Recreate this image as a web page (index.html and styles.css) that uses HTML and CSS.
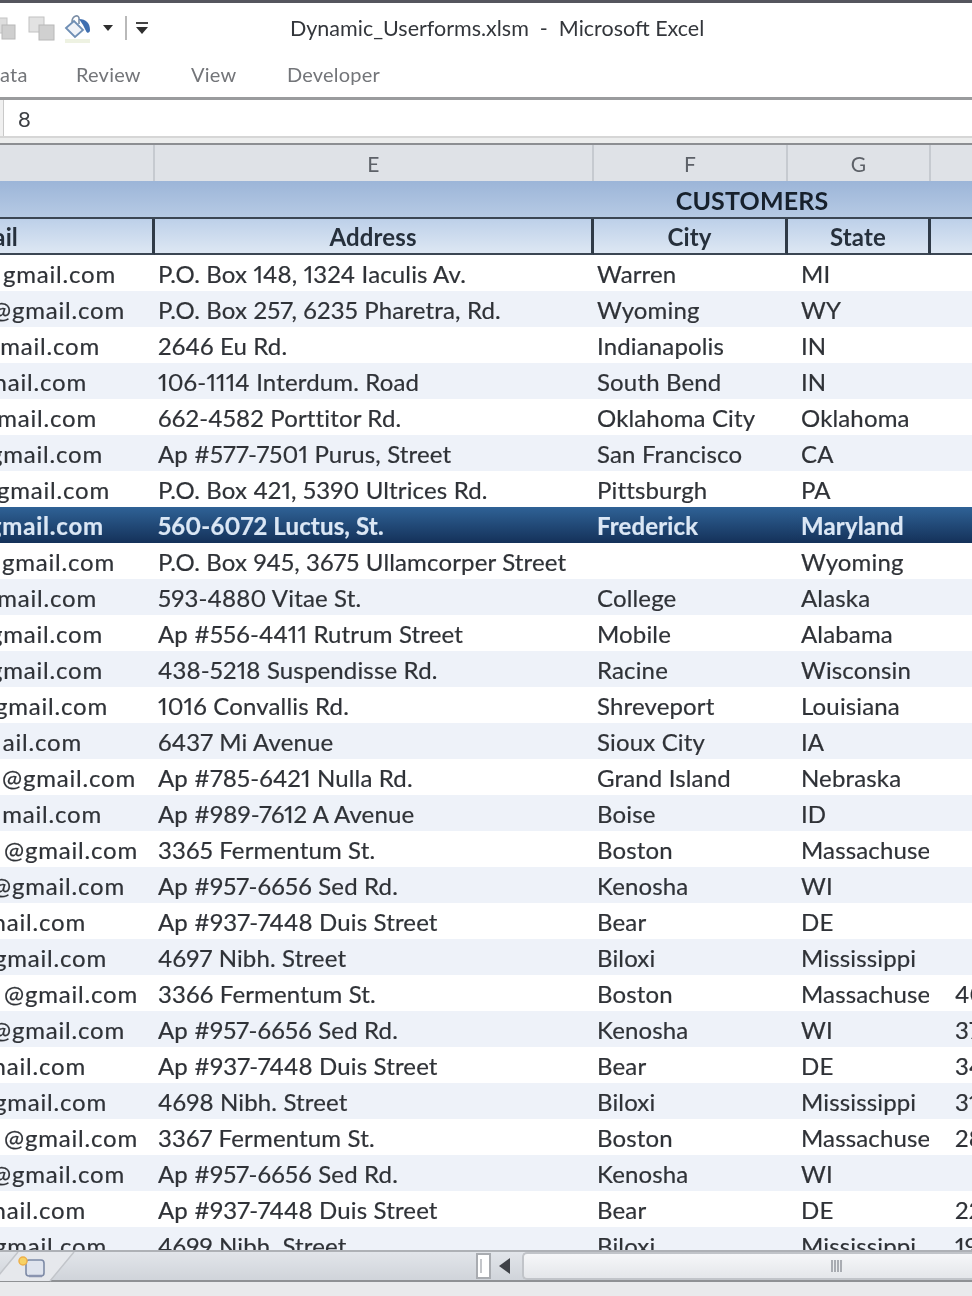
FILE: index.html
```html
<!DOCTYPE html>
<html lang="en">
<head>
    <meta charset="UTF-8">
    <title>Dynamic_Userforms.xlsm - Microsoft Excel</title>
    <link rel="stylesheet" href="styles.css">
</head>
<body>
<div class="app">
    <div class="top-strip"></div>
    <div class="title-bar">
        <div class="qat">
            <svg class="qat-icon" width="20" height="30" viewBox="0 0 20 30"><rect x="-8" y="5" width="15" height="15" fill="#dedede" stroke="#c4c4c4"/><rect x="2" y="12" width="13" height="14" fill="#cfcfcf" stroke="#b8b8b8"/></svg>
            <svg class="qat-icon" width="28" height="30" viewBox="0 0 28 30"><rect x="1" y="4" width="15" height="15" fill="#e2e2e2" stroke="#c2c2c2"/><rect x="11" y="12" width="15" height="15" fill="#d0d0d0" stroke="#b8b8b8"/></svg>
            <svg class="qat-icon" width="28" height="30" viewBox="0 0 28 30"><path d="M2 15 L10 8 L19 17 L11 24 Z" fill="#f0f3f8" stroke="#6f8fb5" stroke-width="1.8"/><path d="M8 9 C8 3 14 1 15 5 L15 11" fill="none" stroke="#7b8ea6" stroke-width="1.6"/><path d="M15 6 C22 6 26 10 26 17 C26 20 23 21 22 18 L19 12 Z" fill="#3f6fb0"/><rect x="1" y="26" width="25" height="4" fill="#eef2e2"/></svg>
            <svg class="qat-caret" width="10" height="6" viewBox="0 0 10 6"><path d="M0 0 H10 L5 6 Z" fill="#2f2f2f"/></svg>
            <span class="qat-sep"></span>
            <svg class="qat-more" width="12" height="12" viewBox="0 0 12 12"><rect x="0" y="0" width="12" height="2" fill="#444"/><path d="M0 5 H12 L6 12 Z" fill="#2f2f2f"/></svg>
        </div>
        <div class="doc-title">Dynamic_Userforms.xlsm&nbsp; -&nbsp; Microsoft Excel</div>
    </div>
    <div class="ribbon-tabs">
        <span class="tab tab-data">ata</span>
        <span class="tab tab-review">Review</span>
        <span class="tab tab-view">View</span>
        <span class="tab">Developer</span>
    </div>
    <div class="formula-bar">
        <div class="name-edge"></div>
        <div class="formula-value">8</div>
    </div>
    <div class="formula-gap"></div>

    <div class="sheet">
        <table class="grid">
            <colgroup>
                <col class="col-d"><col class="col-e"><col class="col-f"><col class="col-g"><col class="col-h">
            </colgroup>
            <thead>
                <tr class="letters"><th></th><th>E</th><th>F</th><th>G</th><th></th></tr>
                <tr class="band"><th colspan="5">CUSTOMERS</th></tr>
                <tr class="heads"><th class="mail-head"><div class="mail-tail">ail</div></th><th>Address</th><th>City</th><th>State</th><th class="zip-head"></th></tr>
            </thead>
            <tbody>
                <tr><td class="mail"><div class="mail-text end-116">gmail.com</div></td><td>P.O. Box 148, 1324 Iaculis Av.</td><td>Warren</td><td class="state">MI</td><td class="zip"></td></tr>
                <tr><td class="mail"><div class="mail-text end-125">@gmail.com</div></td><td>P.O. Box 257, 6235 Pharetra, Rd.</td><td>Wyoming</td><td class="state">WY</td><td class="zip"></td></tr>
                <tr><td class="mail"><div class="mail-text end-100">mail.com</div></td><td>2646 Eu Rd.</td><td>Indianapolis</td><td class="state">IN</td><td class="zip"></td></tr>
                <tr><td class="mail"><div class="mail-text end-87">nail.com</div></td><td>106-1114 Interdum. Road</td><td>South Bend</td><td class="state">IN</td><td class="zip"></td></tr>
                <tr><td class="mail"><div class="mail-text end-97">mail.com</div></td><td>662-4582 Porttitor Rd.</td><td>Oklahoma City</td><td class="state">Oklahoma</td><td class="zip"></td></tr>
                <tr><td class="mail"><div class="mail-text end-103">gmail.com</div></td><td>Ap #577-7501 Purus, Street</td><td>San Francisco</td><td class="state">CA</td><td class="zip"></td></tr>
                <tr><td class="mail"><div class="mail-text end-110">gmail.com</div></td><td>P.O. Box 421, 5390 Ultrices Rd.</td><td>Pittsburgh</td><td class="state">PA</td><td class="zip"></td></tr>
                <tr class="selected"><td class="mail"><div class="mail-text end-104">gmail.com</div></td><td>560-6072 Luctus, St.</td><td>Frederick</td><td class="state">Maryland</td><td class="zip"></td></tr>
                <tr><td class="mail"><div class="mail-text end-115">gmail.com</div></td><td>P.O. Box 945, 3675 Ullamcorper Street</td><td></td><td class="state">Wyoming</td><td class="zip"></td></tr>
                <tr><td class="mail"><div class="mail-text end-97">mail.com</div></td><td>593-4880 Vitae St.</td><td>College</td><td class="state">Alaska</td><td class="zip"></td></tr>
                <tr><td class="mail"><div class="mail-text end-103">gmail.com</div></td><td>Ap #556-4411 Rutrum Street</td><td>Mobile</td><td class="state">Alabama</td><td class="zip"></td></tr>
                <tr><td class="mail"><div class="mail-text end-103">gmail.com</div></td><td>438-5218 Suspendisse Rd.</td><td>Racine</td><td class="state">Wisconsin</td><td class="zip"></td></tr>
                <tr><td class="mail"><div class="mail-text end-108">gmail.com</div></td><td>1016 Convallis Rd.</td><td>Shreveport</td><td class="state">Louisiana</td><td class="zip"></td></tr>
                <tr><td class="mail"><div class="mail-text end-82">ail.com</div></td><td>6437 Mi Avenue</td><td>Sioux City</td><td class="state">IA</td><td class="zip"></td></tr>
                <tr><td class="mail"><div class="mail-text end-136">@gmail.com</div></td><td>Ap #785-6421 Nulla Rd.</td><td>Grand Island</td><td class="state">Nebraska</td><td class="zip"></td></tr>
                <tr><td class="mail"><div class="mail-text end-102">mail.com</div></td><td>Ap #989-7612 A Avenue</td><td>Boise</td><td class="state">ID</td><td class="zip"></td></tr>
                <tr><td class="mail"><div class="mail-text end-138">@gmail.com</div></td><td>3365 Fermentum St.</td><td>Boston</td><td class="state">Massachuse</td><td class="zip"></td></tr>
                <tr><td class="mail"><div class="mail-text end-125">@gmail.com</div></td><td>Ap #957-6656 Sed Rd.</td><td>Kenosha</td><td class="state">WI</td><td class="zip"></td></tr>
                <tr><td class="mail"><div class="mail-text end-86">nail.com</div></td><td>Ap #937-7448 Duis Street</td><td>Bear</td><td class="state">DE</td><td class="zip"></td></tr>
                <tr><td class="mail"><div class="mail-text end-107">gmail.com</div></td><td>4697 Nibh. Street</td><td>Biloxi</td><td class="state">Mississippi</td><td class="zip"></td></tr>
                <tr><td class="mail"><div class="mail-text end-138">@gmail.com</div></td><td>3366 Fermentum St.</td><td>Boston</td><td class="state">Massachuse</td><td class="zip">40</td></tr>
                <tr><td class="mail"><div class="mail-text end-125">@gmail.com</div></td><td>Ap #957-6656 Sed Rd.</td><td>Kenosha</td><td class="state">WI</td><td class="zip">37</td></tr>
                <tr><td class="mail"><div class="mail-text end-86">nail.com</div></td><td>Ap #937-7448 Duis Street</td><td>Bear</td><td class="state">DE</td><td class="zip">34</td></tr>
                <tr><td class="mail"><div class="mail-text end-107">gmail.com</div></td><td>4698 Nibh. Street</td><td>Biloxi</td><td class="state">Mississippi</td><td class="zip">31</td></tr>
                <tr><td class="mail"><div class="mail-text end-138">@gmail.com</div></td><td>3367 Fermentum St.</td><td>Boston</td><td class="state">Massachuse</td><td class="zip">28</td></tr>
                <tr><td class="mail"><div class="mail-text end-125">@gmail.com</div></td><td>Ap #957-6656 Sed Rd.</td><td>Kenosha</td><td class="state">WI</td><td class="zip"></td></tr>
                <tr><td class="mail"><div class="mail-text end-86">nail.com</div></td><td>Ap #937-7448 Duis Street</td><td>Bear</td><td class="state">DE</td><td class="zip">22</td></tr>
                <tr><td class="mail"><div class="mail-text end-107">gmail.com</div></td><td>4699 Nibh. Street</td><td>Biloxi</td><td class="state">Mississippi</td><td class="zip">19</td></tr>
            </tbody>
        </table>
    </div>

    <div class="sheet-bar">
        <div class="sheet-tab">
            <svg class="tab-shape" width="76" height="30" viewBox="0 0 76 30"><path d="M-6 29 L18 0 H74 L50 29 Z" fill="#e6e8ec"/><path d="M-6 29 L18 0 M74 0 L50 29" fill="none" stroke="#c2c5ca" stroke-width="1.5"/><rect x="26" y="8" width="18" height="16" rx="3" fill="#dfe4ee" stroke="#7d8aa6" stroke-width="1.6"/><path d="M29 24 H42" stroke="#8a94b0" stroke-width="2.5"/><circle cx="23" cy="9" r="4" fill="#f7d264" stroke="#eeb04a" stroke-width="1.5"/></svg>
        </div>
        <div class="scroll-area">
            <div class="splitter"><span class="split-line"></span></div>
            <svg class="scroll-left" width="11" height="16" viewBox="0 0 11 16"><path d="M11 0 V16 L0 8 Z" fill="#3f4247"/></svg>
            <div class="thumb"><span class="grip"></span></div>
        </div>
    </div>
    <div class="status-bar"></div>
</div>
</body>
</html>
```

FILE: styles.css
```css
html, body {
    margin: 0;
    padding: 0;
    background: #fff;
    overflow: hidden;
}
.app {
    width: 972px;
    height: 1296px;
    display: flex;
    flex-direction: column;
    overflow: hidden;
    font-family: Lato, "Open Sans", sans-serif;
    color: #2f3237;
    filter: blur(0.45px);
}
.top-strip {
    height: 3px;
    background: #55565e;
}
.title-bar {
    height: 50px;
    display: flex;
    align-items: center;
}
.qat {
    width: 290px;
    display: flex;
    align-items: center;
}
.qat-icon {
    margin-right: 8px;
    flex: none;
}
.qat-caret {
    margin-left: 3px;
}
.qat-sep {
    width: 2px;
    height: 24px;
    background: #b9b9b9;
    margin: 0 9px 0 12px;
}
.doc-title {
    font-size: 21.5px;
    color: #33363b;
    white-space: nowrap;
}
.ribbon-tabs {
    height: 44px;
    display: flex;
    align-items: center;
    font-size: 20px;
    letter-spacing: 0.2px;
    color: #737579;
    box-sizing: border-box;
    padding-top: 2px;
    padding-bottom: 4px;
}
.tab-data {
    width: 76px;
}
.tab-review {
    width: 115px;
}
.tab-view {
    width: 96px;
}
.formula-bar {
    height: 36px;
    border-top: 3px solid #9a9b9d;
    border-bottom: 2px solid #d6d6d6;
    display: flex;
}
.name-edge {
    width: 3px;
    background: #f0f0f0;
    border-right: 1px solid #c9c9c9;
}
.formula-value {
    padding-left: 14px;
    font-size: 22px;
    line-height: 38px;
    color: #3c3f44;
}
.formula-gap {
    height: 5px;
    background: #eceded;
    border-bottom: 2px solid #8c8e92;
}
.sheet {
    flex: 1;
    min-height: 0;
    overflow: hidden;
}
.grid {
    table-layout: fixed;
    width: 1504px;
    border-collapse: separate;
    border-spacing: 0;
    font-size: 24px;
    font-variant-numeric: proportional-nums;
    letter-spacing: 0.15px;
}
.col-d { width: 155px; }
.col-e { width: 439px; }
.col-f { width: 194px; }
.col-g { width: 143px; }
.col-h { width: 573px; }

.letters th {
    height: 36px;
    padding: 0;
    background: #dfe2e7;
    border-right: 2px solid #c6cad0;
    box-sizing: border-box;
    font-weight: 400;
    font-size: 21px;
    color: #5d6168;
}
.band th {
    height: 38px;
    padding: 1px 0 0;
    box-sizing: border-box;
    background: linear-gradient(#9cb5d8, #b6cae4);
    border-bottom: 2px solid #3b4653;
    font-size: 25px;
    font-weight: 700;
    color: #16202c;
}
.heads th {
    height: 36px;
    padding: 1px 0 0;
    box-sizing: border-box;
    background: linear-gradient(#bdd0e9, #dde7f3);
    border-right: 3px solid #2f3a47;
    border-bottom: 2px solid #3b4653;
    font-weight: 700;
    color: #26303c;
}
.heads .mail-head {
    text-align: left;
}
.mail-tail {
    width: 18px;
    display: flex;
    justify-content: flex-end;
    overflow: hidden;
}
.heads .zip-head {
    border-right: none;
}
tbody td {
    height: 36px;
    padding: 0 0 0 3px;
    box-sizing: border-box;
    white-space: nowrap;
    overflow: hidden;
    -webkit-text-stroke: 0.2px;
}
tbody td.mail {
    padding-left: 0;
}
.mail-text {
    display: flex;
    justify-content: flex-end;
    overflow: hidden;
    letter-spacing: 0.8px;
}
.end-82 { width: 82px; }
.end-86 { width: 86px; }
.end-87 { width: 87px; }
.end-97 { width: 97px; }
.end-100 { width: 100px; }
.end-102 { width: 102px; }
.end-103 { width: 103px; }
.end-104 { width: 104px; }
.end-107 { width: 107px; }
.end-108 { width: 108px; }
.end-110 { width: 110px; }
.end-115 { width: 115px; }
.end-116 { width: 116px; }
.end-125 { width: 125px; }
.end-136 { width: 136px; }
.end-138 { width: 138px; }

tbody tr:nth-child(even) td {
    background: #eef2f9;
}
tbody td.state {
    padding-left: 13px;
    border-right: 2px solid transparent;
}
tbody td.zip {
    padding-left: 24px;
}
tbody tr.selected td {
    background: linear-gradient(#2f6296, #143159);
    color: #dbe7f5;
    font-weight: 700;
}
.sheet-bar {
    height: 28px;
    flex: none;
    display: flex;
    background: linear-gradient(#e2e5ea, #d0d4da);
    border-top: 2px solid #aeb1b6;
    border-bottom: 2px solid #8f9194;
}
.sheet-tab {
    width: 76px;
    flex: none;
}
.tab-shape {
    display: block;
}
.scroll-area {
    flex: 1;
    display: flex;
    align-items: center;
    padding-left: 400px;
}
.splitter {
    width: 9px;
    height: 22px;
    background: #fff;
    border: 2px solid #a9acb1;
    display: flex;
    align-items: center;
    padding-left: 2px;
    box-sizing: content-box;
}
.split-line {
    width: 2px;
    height: 14px;
    background: #c4c6ca;
}
.scroll-left {
    margin-left: 8px;
}
.thumb {
    margin-left: 12px;
    flex: 1;
    height: 24px;
    border: 2px solid #c1c4c9;
    border-right: none;
    border-radius: 5px 0 0 5px;
    background: linear-gradient(#f6f7f9, #e4e6ea);
    display: flex;
    align-items: center;
    padding-left: 307px;
}
.grip {
    width: 12px;
    height: 12px;
    background: repeating-linear-gradient(90deg, #a9acb2 0 2px, #eceef0 2px 3px);
}
.status-bar {
    height: 14px;
    flex: none;
    background: #e9eaec;
}
```
